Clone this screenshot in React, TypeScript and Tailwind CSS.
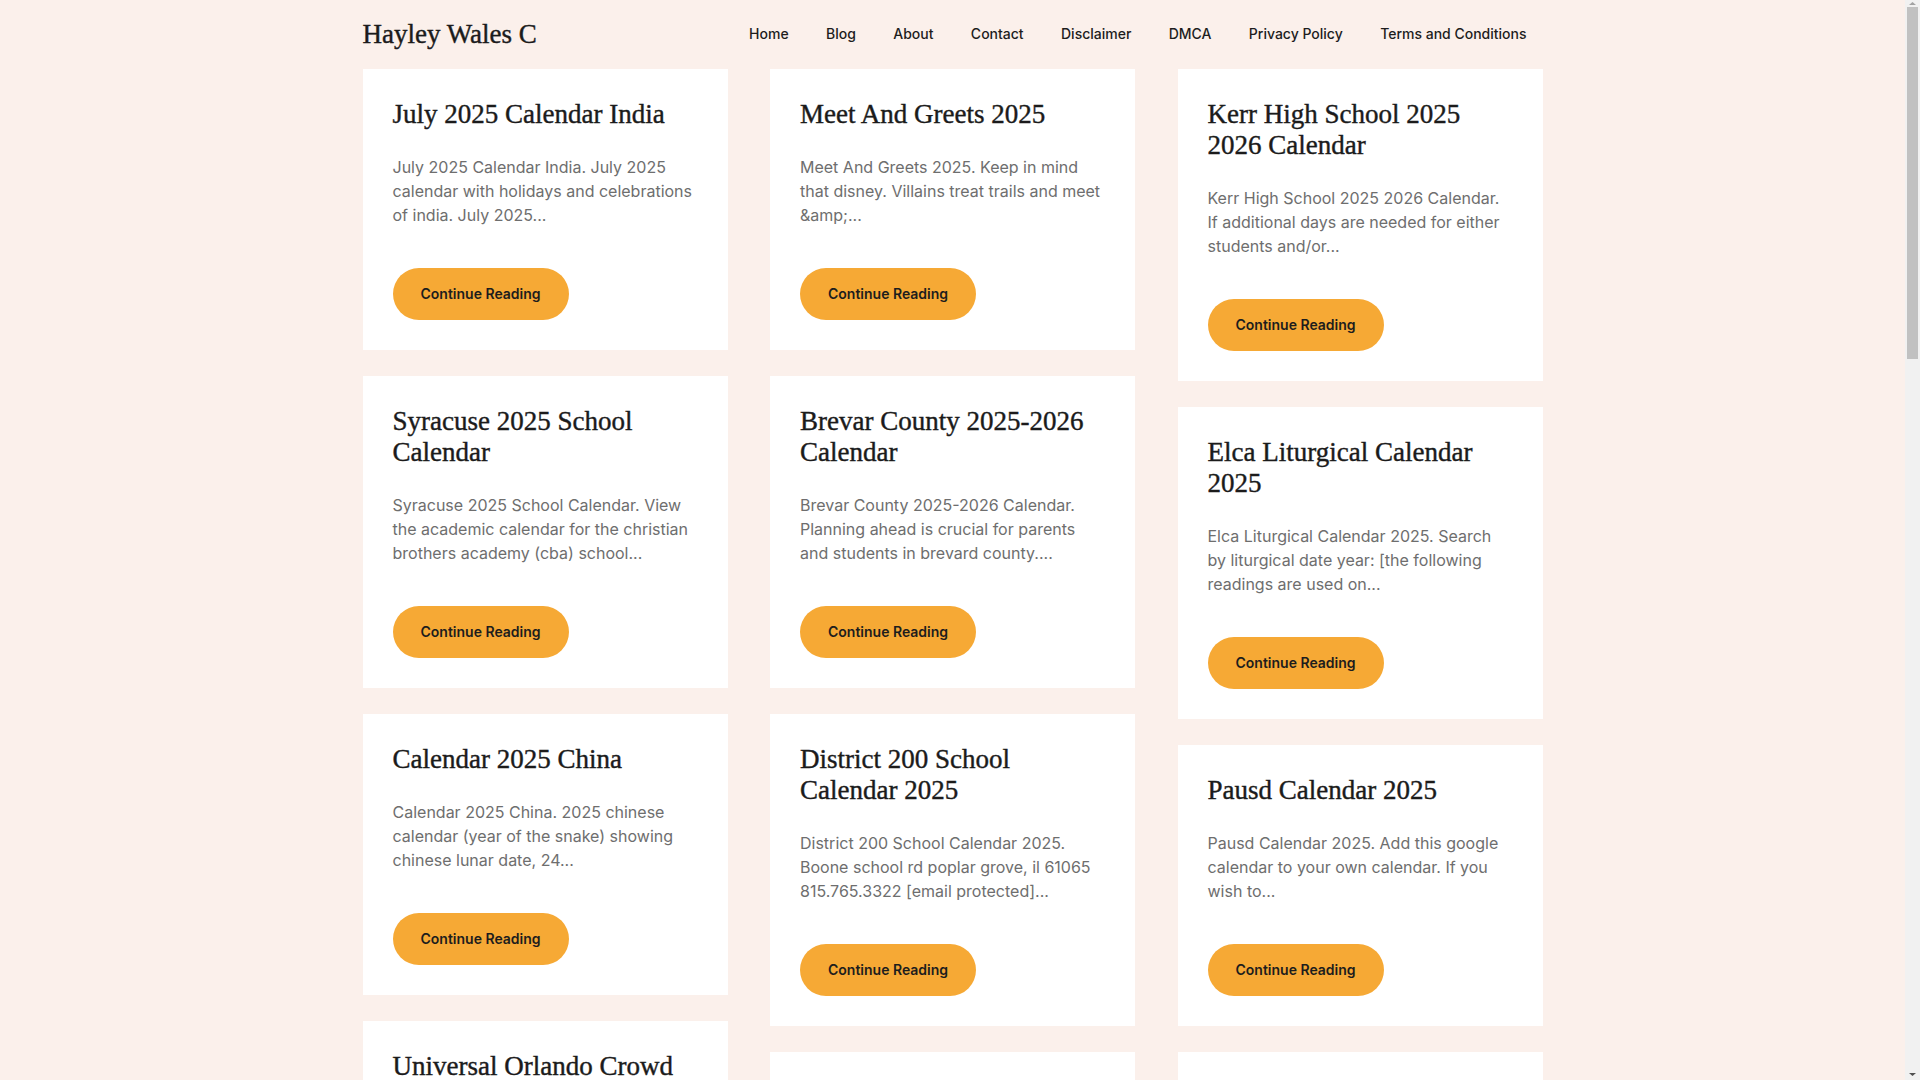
const nav = ["Home", "Blog", "About", "Contact", "Disclaimer", "DMCA", "Privacy Policy", "Terms and Conditions"];

type Post = { title: string; excerpt: string };

const columns: Post[][] = [
  [
    {
      title: "July 2025 Calendar India",
      excerpt: "July 2025 Calendar India. July 2025 calendar with holidays and celebrations of india. July 2025...",
    },
    {
      title: "Syracuse 2025 School Calendar",
      excerpt: "Syracuse 2025 School Calendar. View the academic calendar for the christian brothers academy (cba) school...",
    },
    {
      title: "Calendar 2025 China",
      excerpt: "Calendar 2025 China. 2025 chinese calendar (year of the snake) showing chinese lunar date, 24...",
    },
    {
      title: "Universal Orlando Crowd Calendar 2025",
      excerpt: "Universal Orlando Crowd Calendar 2025. Plan your visit with the best days to go and the...",
    },
    {
      title: "Lunar Calendar 2025 Printable",
      excerpt: "Lunar Calendar 2025 Printable. Moon phases for every month of the year in a simple...",
    },
  ],
  [
    {
      title: "Meet And Greets 2025",
      excerpt: "Meet And Greets 2025. Keep in mind that disney. Villains treat trails and meet &amp;...",
    },
    {
      title: "Brevar County 2025-2026 Calendar",
      excerpt: "Brevar County 2025-2026 Calendar. Planning ahead is crucial for parents and students in brevard county....",
    },
    {
      title: "District 200 School Calendar 2025",
      excerpt: "District 200 School Calendar 2025. Boone school rd poplar grove, il 61065 815.765.3322 [email protected]...",
    },
    {
      title: "Nfl Schedule 2025 Calendar",
      excerpt: "Nfl Schedule 2025 Calendar. Every game of the regular season sorted by week and kickoff...",
    },
  ],
  [
    {
      title: "Kerr High School 2025 2026 Calendar",
      excerpt: "Kerr High School 2025 2026 Calendar. If additional days are needed for either students and/or...",
    },
    {
      title: "Elca Liturgical Calendar 2025",
      excerpt: "Elca Liturgical Calendar 2025. Search by liturgical date year: [the following readings are used on...",
    },
    {
      title: "Pausd Calendar 2025",
      excerpt: "Pausd Calendar 2025. Add this google calendar to your own calendar. If you wish to...",
    },
    {
      title: "Fiscal Year 2025 Calendar",
      excerpt: "Fiscal Year 2025 Calendar. Start and end dates of each quarter and period for the...",
    },
  ],
];

const serif = "font-['Liberation_Serif',serif] [-webkit-text-stroke:0.4px_#1b1b1b]";

function Card({ post }: { post: Post }) {
  return (
    <article className="bg-white p-[30px]">
      <h2 className={`text-[27px] leading-[31px] text-[#1b1b1b] ${serif}`}>{post.title}</h2>
      <p className="mt-[25px] text-[16px] leading-[24px] text-[#6e6e6e]">{post.excerpt}</p>
      <div className="mt-[41px]">
        <a
          href="#"
          className="inline-flex h-[52px] items-center rounded-full bg-[#f6a935] px-[28px] pb-[1px] text-[14px] font-semibold text-[#1d1d1d]"
        >
          Continue Reading
        </a>
      </div>
    </article>
  );
}

function Scrollbar() {
  return (
    <div className="flex h-full w-[15px] shrink-0 flex-col items-center bg-[#f1f1f1]">
      <svg width="15" height="7" viewBox="0 0 15 7" className="shrink-0">
        <path d="M4 5 L7.5 2 L11 5 Z" fill="#a3a3a3" />
      </svg>
      <div className="h-[352px] w-[11px] shrink-0 bg-[#c1c1c1]" />
      <div className="flex-1" />
      <svg width="15" height="7" viewBox="0 0 15 7" className="mb-[2px] shrink-0">
        <path d="M4 2 L11 2 L7.5 5 Z" fill="#505050" />
      </svg>
    </div>
  );
}

export default function App() {
  return (
    <div className="flex h-screen overflow-hidden bg-[#fbf0eb] font-['Inter',sans-serif]">
      <div className="h-full flex-1 overflow-hidden">
        <div className="mx-auto w-[1180px]">
          <header className="flex h-[69px] items-center justify-between">
            <div className={`text-[27px] leading-none text-[#1b1b1b] ${serif}`}>Hayley Wales C</div>
            <nav className="flex items-center pr-[16px] pb-[2px]">
              {nav.map((item) => (
                <a
                  key={item}
                  href="#"
                  className="px-[18.7px] text-[14px] font-medium text-[#1d1d1d] first:pl-0 last:pr-0"
                >
                  {item}
                </a>
              ))}
            </nav>
          </header>

          <main className="flex justify-between pb-[40px]">
            {columns.map((col, i) => (
              <div key={i} className="flex w-[365px] flex-col gap-[26px]">
                {col.map((post) => (
                  <Card key={post.title} post={post} />
                ))}
              </div>
            ))}
          </main>
        </div>
      </div>
      <Scrollbar />
    </div>
  );
}
